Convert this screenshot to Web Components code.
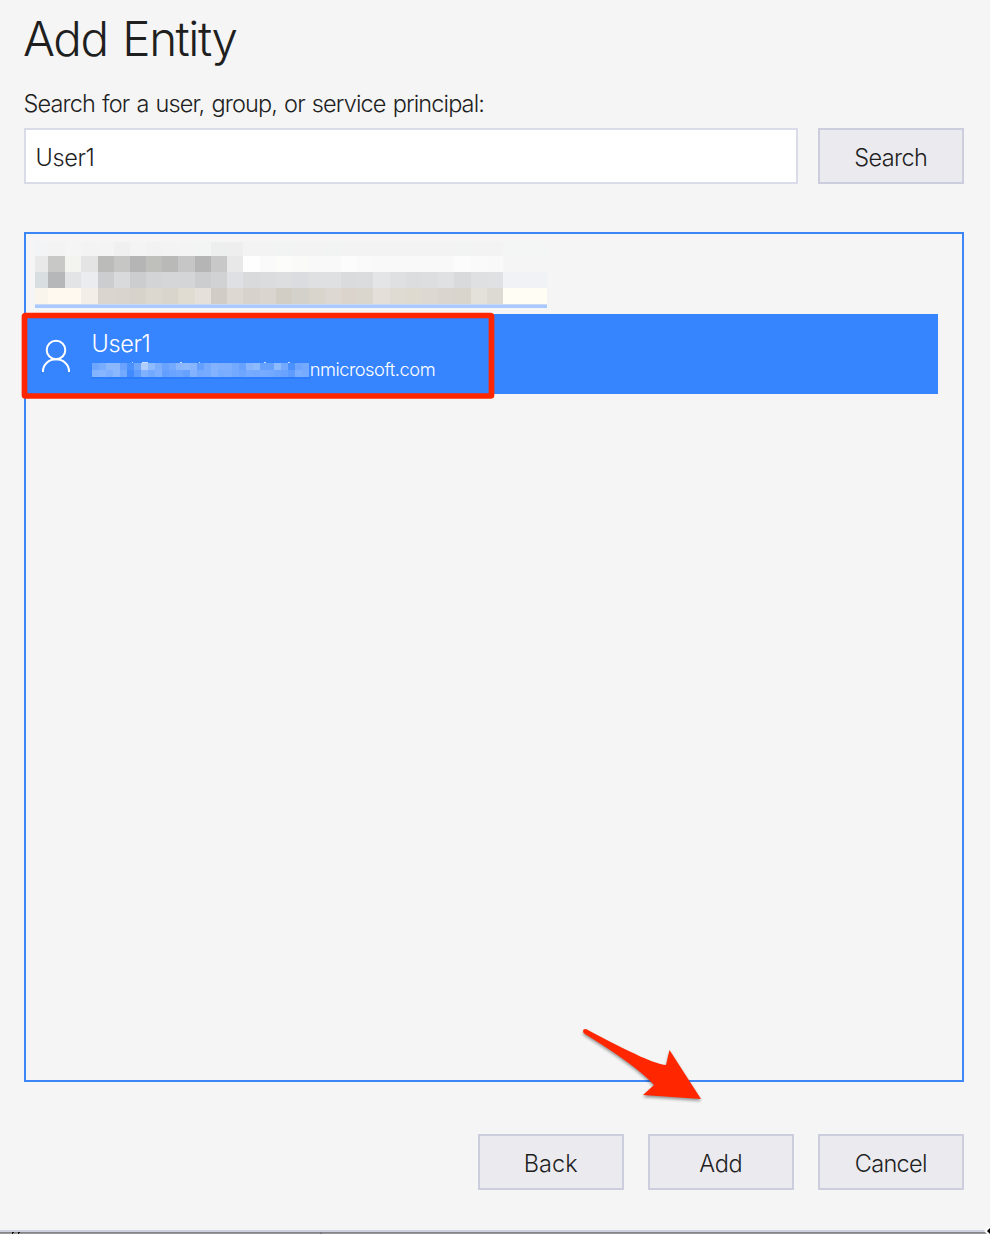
<!DOCTYPE html>
<html lang="en">
<head>
<meta charset="utf-8">
<title>Add Entity</title>
<style>
html,body{margin:0;height:100%;overflow:hidden;background:#f5f5f5}
body{font-family:Inter,"Liberation Sans",sans-serif;font-weight:330;color:#1f1f1f}
</style>
</head>
<body>
<entity-dialog></entity-dialog>
<script>
const define = (name, html, setup) => customElements.define(name, class extends HTMLElement {
  connectedCallback() {
    if (this.shadowRoot) return;
    const t = document.createElement('template');
    t.innerHTML = html;
    this.attachShadow({mode: 'open'}).append(t.content.cloneNode(true));
    if (setup) setup(this, this.shadowRoot);
  }
});

// One line of text, tracked so that it takes exactly the given width.
define('tracked-text', `<style>
:host{display:block;white-space:nowrap}
span{display:inline-block;white-space:nowrap;word-spacing:.06em;margin-left:-.02em}
</style><span><slot></slot></span>`, (el, root) => {
  const span = root.querySelector('span');
  const want = +el.getAttribute('width');
  const n = el.textContent.length;
  const gap = (want - span.getBoundingClientRect().width) / n;
  span.style.letterSpacing = gap.toFixed(3) + 'px';
});

define('push-button', `<style>
:host{display:block;flex:none;width:146px;height:56px}
button{display:flex;align-items:center;justify-content:center;box-sizing:border-box;width:100%;height:100%;margin:0;padding:3px 0 0;border:2px solid #cccddd;background:#ebebef;font:inherit;font-size:23.5px;color:inherit}
</style><button><slot></slot></button>`);

define('search-box', `<style>
:host{display:flex;align-items:center;box-sizing:border-box;flex:1;height:56px;border:2px solid #d9dce8;background:#fff;padding:3px 0 0 10px;font-size:23.5px}
</style><slot></slot>`);

// Pixelated name of the first result.
const edges = [35,48,65,81,98,114,130,146,162,178,195,211,227,243,260,276,292,309,325,341,357,373,390,406,422,438,454,471,487,503,547];
const rows = [
 [242,14,'f2f4f6 f3f3f3 f5f5f5 f3f3f3 f4f4f4 f0f0f0 f4f4f4 f2f2f2 f3f3f3 f4f4f4 f3f4f4 edefee eeeeee f3f3f3 f3f3f3 f2f3f3 f3f3f3 f3f3f3 f2f3f3 f3f3f3 f3f3f3 f3f3f3 f3f3f3 f3f3f3 f3f3f3 f3f3f3 f2f3f3 f3f3f3 f3f3f3 f4f5f5'],
 [256,16,'e9e9e9 c8c8c7 f3f3f0 e4e4e4 bbbbb9 c6c6c4 b5b5b5 bfbfbc b9b9b8 c6c6c6 b5b5b5 c8c8c8 e8e8e8 fefefe fafafa fcfcfa fafaf8 f9f9f9 f9f9f9 fcfcfc fafafa f9f9f9 f9f9f9 f9f9f9 f9f9f9 f9f9f9 fcfcfc fafafa f9f9f9 f5f5f5'],
 [272,16,'d9dee1 b6b7b9 e3e4e6 eaecef cccdcf d9dadc cccdcf d3d4d6 d5d6d8 d4d5d7 cccdcf d1d2d4 dfe0e3 d9dadc dbdcde dddee0 dbdce0 dfe0e2 dfe0e2 d9dbdd dbdcde e4e5e7 dee0e2 dbdddf dcdee0 e0e1e3 d9dadc dfe0e2 e0e1e3 f0f2f6'],
 [288,16,'f9f5ed fff9f0 fff9f0 f3eee7 dad5cf d9d4ce d7d2ca dcd8d0 d9d4cc e0dcd1 e5e1da d1cdc6 ddd8d1 d7d2cb dad5cf d2cdc5 d4d0ca d9d4cc ddd8d1 dad4cd dad6ce e4dfd9 dfdad2 dfdad0 ddd8d1 dad5ce d9d4cc e4e0da ddd9d3 fffdf4']
];
let redacted = '';
for (const [y, h, colours] of rows) colours.split(' ').forEach((c, i) => {
  redacted += `<rect x="${edges[i]-35}" y="${y-242}" width="${edges[i+1]-edges[i]}" height="${h}" fill="#${c}"/>`;
});
define('redacted-row', `<style>
:host{display:block;height:72px;padding:8px 0 0 9px;box-sizing:border-box}
svg{display:block}
</style><svg width="512" height="66" shape-rendering="crispEdges">${redacted}<rect y="62" width="512" height="4" fill="#a9caff"/><rect y="62" width="512" height="1" fill="#c8d9f4"/></svg>`);

// Pixelated start of the address: white at these opacities over the row.
const upper = [28,33,42,42,26,10,28,60,44,34,26,30,41,43,40,22,31,38,36,35,30,24,40,44,24,24,44,30,10,28,30];
const lower = [38,40,36,42,30,6,20,37,30,36,22,25,27,24,38,30,32,38,33,34,30,28,32,31,32,30,28,26,20,34,32];
let mask = '';
[upper, lower].forEach((r, j) => r.forEach((v, i) => {
  mask += `<rect x="${i*7+1}" y="${4+j*7}" width="7" height="7" fill="#fff" fill-opacity="${v/100}"/>`;
}));
define('user-row', `<style>
:host{display:flex;width:912px;height:80px;background:#3784ff;color:#fff}
.icon{display:block;flex:none;width:66px;height:80px}
.info{display:flex;flex-direction:column;padding-top:14px}
.name{font-size:23.5px;line-height:32px;height:32px}
.mail{display:flex;font-size:18.3px;line-height:20px;margin-top:-1px}
.mask{display:block;flex:none;margin-left:-1px}
</style>
<svg class="icon" viewBox="0 0 66 80" fill="none" stroke="#fff" stroke-width="2"><circle cx="30" cy="36" r="9.3"/><path d="M17 58v-1a13 11.8 0 0 1 26 0v1"/></svg>
<div class="info">
<tracked-text class="name" width="59">User1</tracked-text>
<div class="mail"><svg class="mask" width="219" height="22" shape-rendering="crispEdges"><rect y="18" width="219" height="2" fill="#2b7cfb"/>${mask}<path d="M41 3.500h1M51 3.500h6M89 3.500h2M108 3.500h1M173 3.500h2M197 3.500h2" stroke="#cfe1ff" stroke-width="1"/></svg><tracked-text width="125.500">nmicrosoft.com</tracked-text></div>
</div>`);

define('result-list', `<style>
:host{display:block;box-sizing:border-box;height:850px;border:2px solid #3c86f8}
</style><slot></slot>`);

define('red-frame', `<style>
:host{position:absolute;left:21px;top:312px;width:474px;height:87px}
svg{display:block}
</style><svg width="474" height="87"><rect x="3.500" y="3.500" width="467" height="80.500" rx="1" fill="none" stroke="#ff2600" stroke-width="5.700" stroke-linejoin="round"/></svg>`);

define('red-arrow', `<style>
:host{position:absolute;left:570px;top:1015px;width:150px;height:100px}
svg{display:block;filter:drop-shadow(0 2px 1.5px rgba(0,0,0,.4))}
</style><svg width="150" height="100"><path d="M16 14Q13 14 13 16Q13 18 15 19Q67 51 84 70L73 80L131 84L99.500 35L96 50C85 49 65 40 16 14Z" fill="#ff2600"/></svg>`);

// Strip of the window behind the dialog's lower edge.
define('window-edge', `<style>
:host{display:block;height:4px}
svg{display:block}
</style><svg width="990" height="7" style="margin-top:-3px"><path d="M0 3h990v2H0z" fill="#cecfdf"/><path d="M0 5h990v2H0z" fill="#999796"/><path d="M0 5h990v1H0z" fill="#85858b"/><path d="M12 5h2v1h-1v1h-1zM18 5h2v1h-1v1h-1z" fill="#111"/><path d="M320 5h2v2h-2z" fill="#777980"/><path d="M984 4l4-4h2v7h-3z" fill="#fff"/><path d="M987 4l3-3v6z" fill="#000"/></svg>`);

define('entity-dialog', `<style>
:host{display:flex;flex-direction:column;position:relative;width:990px;height:1234px;background:#f5f5f5}
main{flex:1;padding:10px 26px 0 24px}
h1{margin:0;font-size:47.5px;line-height:58px;font-weight:inherit}
.label{font-size:23.5px;line-height:32px;margin:20px 0 8px}
.bar{display:flex;gap:20px;margin-bottom:48px}
.actions{display:flex;justify-content:flex-end;gap:24px;margin-top:52px}
</style>
<main>
<h1><tracked-text width="213.500">Add Entity</tracked-text></h1>
<div class="label"><tracked-text width="460.500">Search for a user, group, or service principal:</tracked-text></div>
<div class="bar"><search-box><tracked-text width="59">User1</tracked-text></search-box><push-button><tracked-text width="73">Search</tracked-text></push-button></div>
<result-list><redacted-row></redacted-row><div style="height:8px"></div><user-row></user-row></result-list>
<div class="actions"><push-button><tracked-text width="54">Back</tracked-text></push-button><push-button><tracked-text width="43">Add</tracked-text></push-button><push-button><tracked-text width="72">Cancel</tracked-text></push-button></div>
</main>
<window-edge></window-edge>
<red-frame></red-frame>
<red-arrow></red-arrow>`);
</script>
</body>
</html>
